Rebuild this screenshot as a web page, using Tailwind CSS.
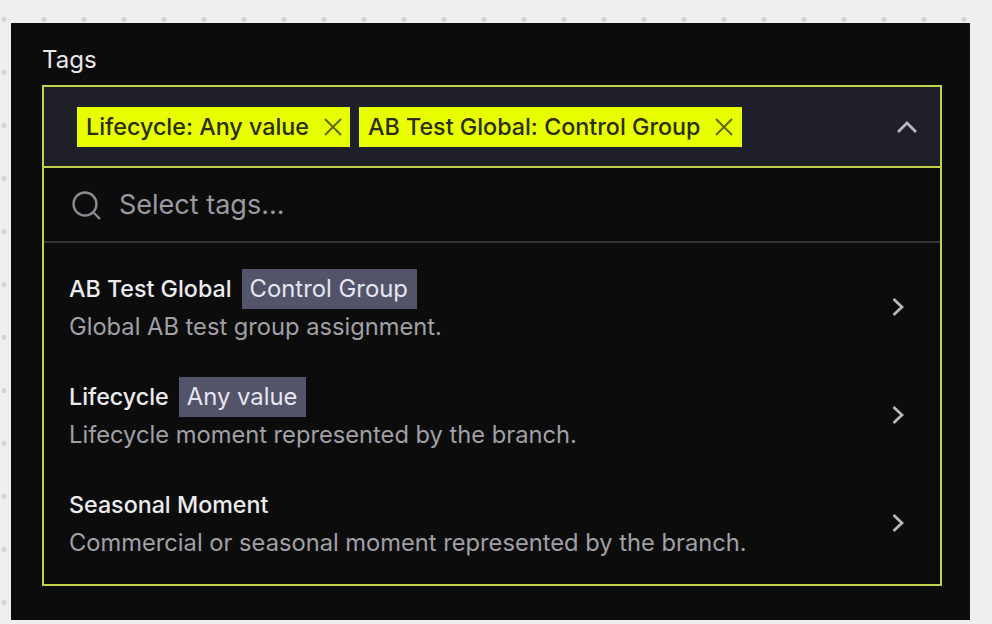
<!DOCTYPE html>
<html>
    <head>
        <meta charset="utf-8">
        <title>Tags</title>
        <script src="https://cdn.jsdelivr.net/npm/@tailwindcss/browser@4"></script>
    </head>
    <body>
        <!--page with dot grid-->
        <div class="w-[992px] h-[624px] overflow-hidden bg-[#efefef] bg-[radial-gradient(circle,#d4d4d4_2px,transparent_3px)] bg-size-[40px_53px] bg-position-[24px_-7px] pl-[11px] pt-[23px] font-['Inter',sans-serif]">
            <div class="w-[959px] h-[597px] bg-[#0c0c0d] pl-[31px] pr-[28px]">
                <!--label-->
                <div class="h-[62px] pt-[22px] text-[24px] leading-[30px] text-[#e8e8ea]">Tags</div>
                <!--field-->
                <div class="w-[900px] h-[501px] border-2 border-[#c3d24a]">
                    <!--selected tags-->
                    <div class="h-[81px] bg-[#1f1f29] border-b-2 border-[#c3d24a] pl-[33px] pr-[23px] flex items-center">
                        <div class="flex gap-[9px] flex-1">
                            <span class="h-10 bg-[#e8ff00] text-[#2a2e08] pl-[9px] pr-2 pt-[2px] flex items-center gap-[15px] text-[23.3px] font-medium">
                                Lifecycle: Any value
                                <svg class="w-[18px] h-[18px] -mt-[2px]" viewBox="0 0 18 18" fill="none" stroke="#5c6410" stroke-width="1.8"><path d="M1 1l16 16M17 1L1 17"/></svg>
                            </span>
                            <span class="h-10 bg-[#e8ff00] text-[#2a2e08] pl-[9px] pr-[9px] pt-[2px] flex items-center gap-[15px] text-[23.3px] font-medium">
                                AB Test Global: Control Group
                                <svg class="w-[18px] h-[18px] -mt-[2px]" viewBox="0 0 18 18" fill="none" stroke="#5c6410" stroke-width="1.8"><path d="M1 1l16 16M17 1L1 17"/></svg>
                            </span>
                        </div>
                        <svg class="w-5 h-[13px]" viewBox="0 0 20 13" fill="none" stroke="#b8b8c0" stroke-width="2.8"><path d="M1 12l9-9 9 9"/></svg>
                    </div>
                    <!--search-->
                    <div class="h-[75px] border-b-2 border-[#35353a] pl-[27px] pt-[2px] flex items-center gap-[17px] text-[27px] text-[#9a9aa0]">
                        <svg class="w-[31px] h-[31px]" viewBox="0 0 31 31" fill="none" stroke="#8a8a90" stroke-width="2.4"><circle cx="14" cy="14" r="11.5"/><path d="M22.5 22.5l6.5 6.5"/></svg>
                        Select tags...
                    </div>
                    <!--options-->
                    <div class="pl-[25px] pr-[36px] pt-[26px] flex flex-col gap-[32px]">
                        <div class="flex items-center justify-between">
                            <div>
                                <div class="h-10 flex items-center gap-[10px] text-[23.25px] font-medium text-[#ececee]">
                                    AB Test Global
                                    <span class="h-10 bg-[#53536a] text-[#e6e6f0] text-[23.85px] pl-2 pr-[9px] flex items-center font-normal">Control Group</span>
                                </div>
                                <div class="h-[36px] text-[23.7px] leading-[36px] text-[#a0a0a6]">Global AB test group assignment.</div>
                            </div>
                            <svg class="w-[12px] h-[20px]" viewBox="0 0 12 20" fill="none" stroke="#b8b8c0" stroke-width="2.8"><path d="M1.5 2l8.5 8-8.5 8"/></svg>
                        </div>
                        <div class="flex items-center justify-between">
                            <div>
                                <div class="h-10 flex items-center gap-[10px] text-[23.25px] font-medium text-[#ececee]">
                                    Lifecycle
                                    <span class="h-10 bg-[#53536a] text-[#e6e6f0] text-[23.85px] pl-2 pr-[9px] flex items-center font-normal">Any value</span>
                                </div>
                                <div class="h-[36px] text-[23.7px] leading-[36px] text-[#a0a0a6]">Lifecycle moment represented by the branch.</div>
                            </div>
                            <svg class="w-[12px] h-[20px]" viewBox="0 0 12 20" fill="none" stroke="#b8b8c0" stroke-width="2.8"><path d="M1.5 2l8.5 8-8.5 8"/></svg>
                        </div>
                        <div class="flex items-center justify-between">
                            <div>
                                <div class="h-10 flex items-center gap-[10px] text-[23.25px] font-medium text-[#ececee]">Seasonal Moment</div>
                                <div class="h-[36px] text-[23.7px] leading-[36px] text-[#a0a0a6]">Commercial or seasonal moment represented by the branch.</div>
                            </div>
                            <svg class="w-[12px] h-[20px]" viewBox="0 0 12 20" fill="none" stroke="#b8b8c0" stroke-width="2.8"><path d="M1.5 2l8.5 8-8.5 8"/></svg>
                        </div>
                    </div>
                </div>
            </div>
        </div>
    </body>
</html>
